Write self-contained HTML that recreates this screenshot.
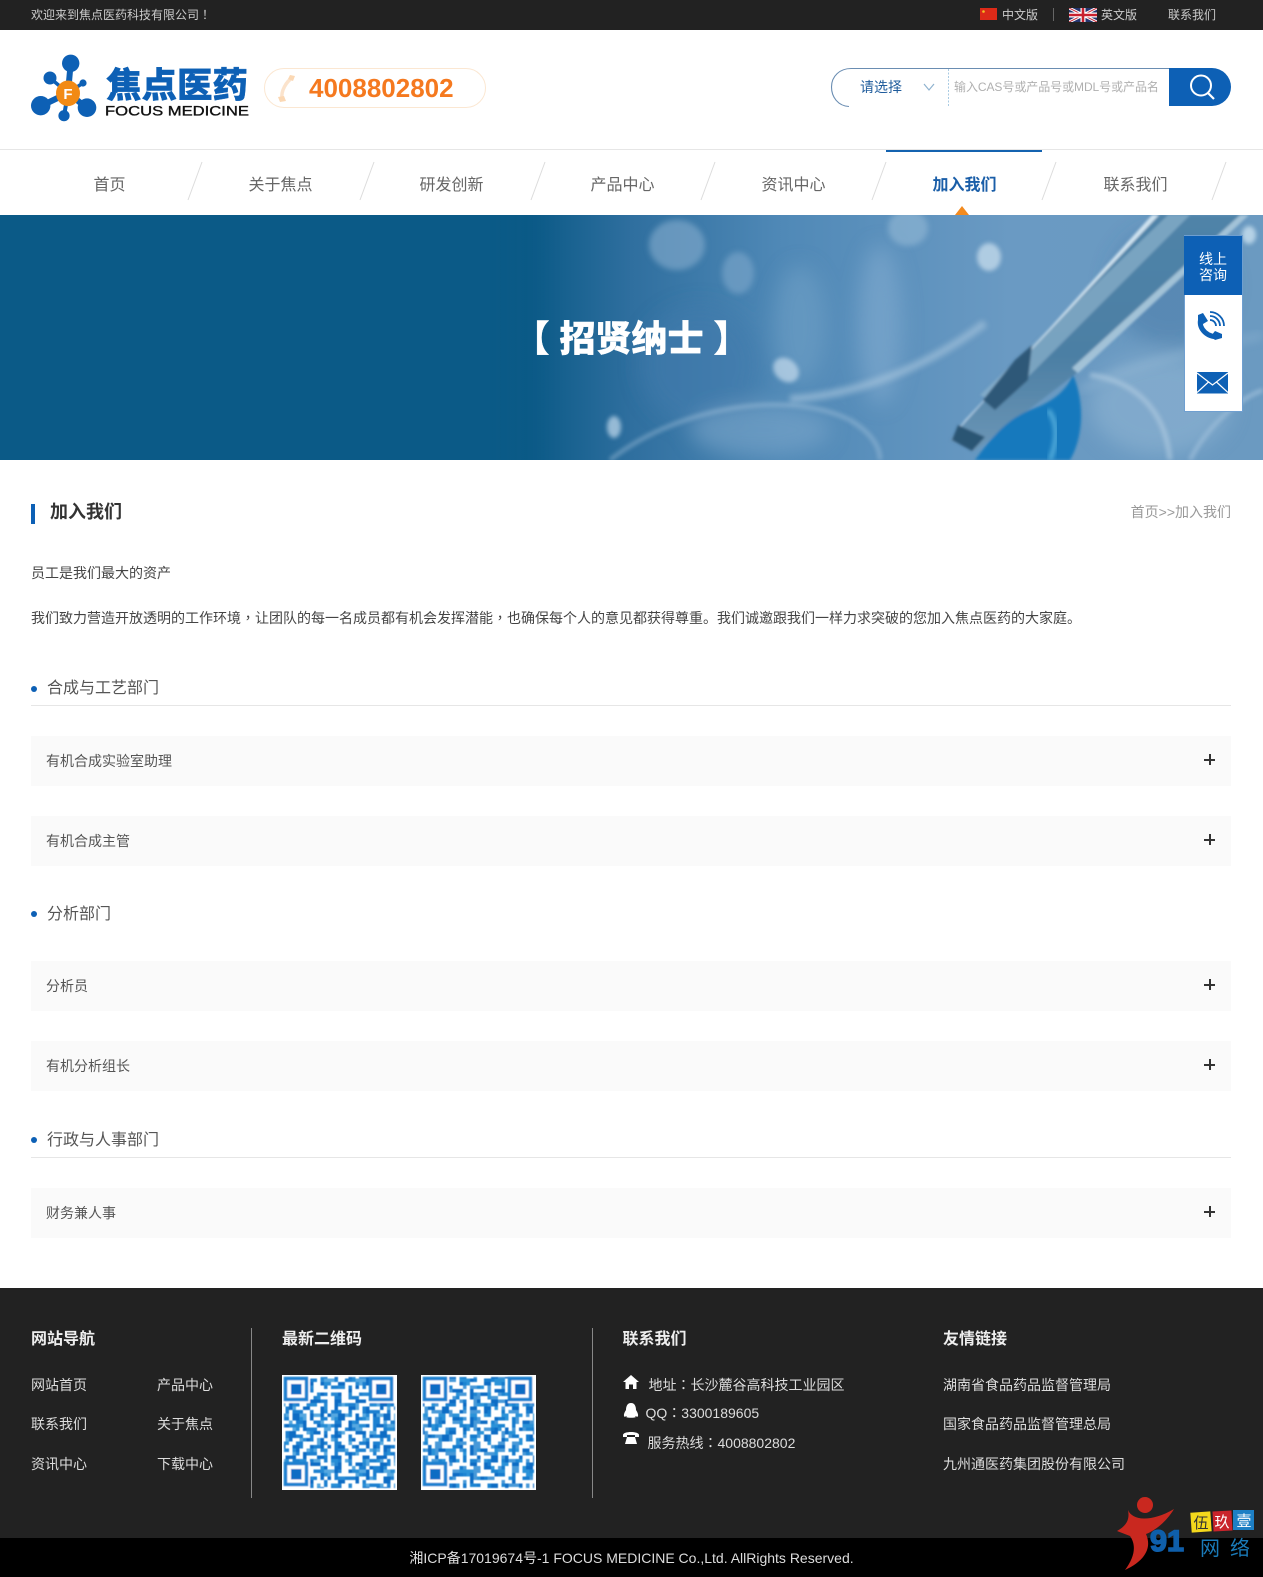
<!DOCTYPE html>
<html><head><meta charset="utf-8"><title>加入我们 - 焦点医药</title>
<style>
*{box-sizing:border-box;margin:0;padding:0}
html,body{width:1263px;height:1577px;overflow:hidden;background:#fff}
body{position:relative;font-family:"Liberation Sans","Noto Sans CJK SC",sans-serif;font-size:14px;color:#444}
.c{font-family:"Noto Sans CJK TC",sans-serif}
.t{position:absolute;white-space:nowrap;line-height:20px;height:20px}
.a{position:absolute}
.nav{font-size:16px;color:#666;width:120px;text-align:center;top:175.500px}
.top{font-size:12px;color:#ccc;top:5px}
.acc{position:absolute;left:31px;width:1200px;height:50px;background:#fafafa;padding-left:15px;line-height:50px;color:#555;font-size:14px}
.acc:before{content:"";position:absolute;left:1173px;top:23px;width:11px;height:2px;background:#333}
.acc:after{content:"";position:absolute;left:1178px;top:18px;width:2px;height:11px;background:#333}
.dept{font-size:16px;color:#555;left:47px}
.dot{position:absolute;left:31px;width:6px;height:6px;border-radius:50%;background:#0d60b5}
.ln{position:absolute;left:31px;width:1200px;height:1px;background:#e6e6e6}
.fh{font-size:16px;font-weight:bold;color:#eee;top:1330px}
.fl{color:#ddd;font-size:14px}
</style></head><body>

<div class="a" style="left:0;top:0;width:1263px;height:30px;background:#222"></div>
<div class="t top" style="left:31px">欢迎来到焦点医药科技有限公司<span class="c" lang="zh-TW">！</span></div>
<svg class="a" style="left:980px;top:8px" width="17" height="12" viewBox="0 0 17 12"><rect width="17" height="12" fill="#dc2a18"/><circle cx="3.5" cy="3.500" r="1.300" fill="#f3c020"/></svg>
<div class="t top" style="left:1002px">中文版</div>
<div class="a" style="left:1053px;top:8px;width:1px;height:13px;background:#666"></div>
<svg class="a" style="left:1069px;top:8px" width="28" height="14" viewBox="0 0 28 14"><rect width="28" height="14" fill="#25356f"/><path d="M0 0L28 14M28 0L0 14" stroke="#fff" stroke-width="3"/><path d="M0 0L28 14M28 0L0 14" stroke="#c8202f" stroke-width="1"/><path d="M14 0V14M0 7H28" stroke="#fff" stroke-width="5"/><path d="M14 0V14M0 7H28" stroke="#c8202f" stroke-width="2.600"/></svg>
<div class="t top" style="left:1101px">英文版</div>
<div class="t top" style="left:1168px">联系我们</div>

<svg class="a" style="left:0;top:30px" width="270" height="110" viewBox="0 30 270 110">
<g stroke="#0d60b5" fill="none"><path d="M70.700 63L68 93" stroke-width="6"/><path d="M50 78L68 93" stroke-width="3.500"/><path d="M83 83L68 93" stroke-width="3.500"/><path d="M41 106L68 93" stroke-width="6"/><path d="M87 108L68 93" stroke-width="6"/><path d="M64 116L68 93" stroke-width="4"/></g>
<g fill="#0d60b5"><circle cx="70.700" cy="63.300" r="8.700"/><circle cx="50" cy="78" r="6.500"/><circle cx="83" cy="83" r="3.600"/><circle cx="40.700" cy="105.700" r="9.700"/><circle cx="87" cy="107.700" r="9.300"/><circle cx="64" cy="115.700" r="5.600"/></g>
<ellipse cx="68" cy="93.300" rx="12" ry="12.800" fill="#f28a14"/>
<text x="68" y="99" text-anchor="middle" font-family="Liberation Sans" font-weight="bold" font-size="15" fill="#fff">F</text>
<text x="106" y="97.500" font-family="Noto Sans CJK SC,sans-serif" font-weight="900" font-size="35" fill="#0d60b5" stroke="#0d60b5" stroke-width=".4" textLength="142" lengthAdjust="spacingAndGlyphs">焦点医药</text>
<text x="105" y="115.500" font-family="Liberation Sans" font-size="13.500" fill="#111" stroke="#111" stroke-width=".35" textLength="144" lengthAdjust="spacingAndGlyphs">FOCUS MEDICINE</text>
</svg>

<div class="a" style="left:264px;top:68px;width:222px;height:40px;border:1px solid #fbe7d2;border-radius:20px"></div>
<svg class="a" style="left:272px;top:72px" width="26" height="32" viewBox="0 0 26 32"><path d="M20 6C14 10 9 19 10 26" fill="none" stroke="#fbe3cc" stroke-width="3.500"/><path d="M18 3l5 1-2 5-5-2zM6 25l6-1 2 5-6 1z" fill="#fbd8b4"/></svg>
<div class="a" style="left:309px;top:72px;font:bold 26px/32px 'Liberation Sans',sans-serif;color:#f5791f;white-space:nowrap">4008802802</div>

<svg class="a" style="left:825px;top:62px" width="350" height="50"><path d="M24 44.500C13 44 6.500 35 6.500 25C6.500 14 15 6.500 26 6.500H345" fill="none" stroke="#6a8db2" stroke-width="1.100"/><path d="M99 22l5 6 5-6" fill="none" stroke="#8fb2cf" stroke-width="1.200"/><path d="M123.500 7V44" stroke="#a9cbe3" stroke-width="1" stroke-dasharray="2 1.500"/></svg>
<div class="t" style="left:860px;top:77px;color:#1f5c9c">请选择</div>
<div class="t" style="left:954px;top:77px;font-size:12px;color:#b0b0b0;letter-spacing:-.06px">输入CAS号或产品号或MDL号或产品名</div>
<div class="a" style="left:1169px;top:68px;width:62px;height:38px;background:#0d60b5;border-radius:0 19px 19px 0"></div>
<svg class="a" style="left:1185px;top:71px" width="34" height="32"><circle cx="16" cy="14.500" r="10" fill="none" stroke="#fff" stroke-width="2"/><path d="M23 22l6 6" stroke="#fff" stroke-width="2.200"/></svg>

<div class="a" style="left:0;top:149px;width:1263px;height:1px;background:#e6e6e6"></div>
<div class="a" style="left:886px;top:150px;width:156px;height:2px;background:#1463b0"></div>
<div class="t nav" style="left:49.500px">首页</div>
<div class="t nav" style="left:220.500px">关于焦点</div>
<div class="t nav" style="left:391.500px">研发创新</div>
<div class="t nav" style="left:562.500px">产品中心</div>
<div class="t nav" style="left:733.500px">资讯中心</div>
<div class="t nav" style="left:904.500px;color:#1a5ea8;font-weight:bold">加入我们</div>
<div class="t nav" style="left:1075.500px">联系我们</div>
<svg class="a" style="left:1px;top:160px" width="1262" height="42"><g stroke="#dcdcdc" stroke-width="1"><path d="M201 2L187 40M373 2L359 40M544 2L530 40M714 2L700 40M885 2L871 40M1055 2L1041 40M1225 2L1211 40"/></g></svg>
<div class="a" style="left:955px;top:206px;width:0;height:0;border-left:7.500px solid transparent;border-right:7.500px solid transparent;border-bottom:9px solid #f28a1e"></div>

<svg class="a" style="left:0;top:215px" width="1263" height="245" viewBox="0 0 1263 245">
<defs>
<linearGradient id="bg" x1="0" x2="1" y1="0" y2="0"><stop offset="0" stop-color="#0b5a87"/><stop offset=".42" stop-color="#0b5a87"/><stop offset=".5" stop-color="#2f6f9f"/><stop offset=".62" stop-color="#5089b7"/><stop offset=".8" stop-color="#6a9ac3"/><stop offset="1" stop-color="#6b9ac1"/></linearGradient>
<linearGradient id="tube" x1="0" x2="0" y1="0" y2="1"><stop offset="0" stop-color="#4f83a8"/><stop offset=".6" stop-color="#4c7fa4"/><stop offset="1" stop-color="#6c96b6"/></linearGradient>
<filter id="b4"><feGaussianBlur stdDeviation="5"/></filter>
<filter id="b3"><feGaussianBlur stdDeviation="3"/></filter>
<filter id="b2"><feGaussianBlur stdDeviation="2"/></filter>
<filter id="b1"><feGaussianBlur stdDeviation="1.200"/></filter>
<filter id="b9"><feGaussianBlur stdDeviation="10"/></filter>
<linearGradient id="fade" x1="0" x2="1" y1="0" y2="0"><stop offset="0" stop-color="#0b5a87" stop-opacity="0"/><stop offset="1" stop-color="#0b5a87"/></linearGradient>
</defs>
<rect width="1263" height="245" fill="url(#bg)"/>
<g filter="url(#b9)"><ellipse cx="880" cy="110" rx="22" ry="80" fill="#89b2d4" opacity=".5"/><ellipse cx="800" cy="110" rx="26" ry="60" fill="#7ea9cd" opacity=".4"/><ellipse cx="700" cy="150" rx="60" ry="60" fill="#3f7bab" opacity=".6"/><ellipse cx="760" cy="215" rx="70" ry="26" fill="#7aa5c9" opacity=".6"/><ellipse cx="1160" cy="190" rx="70" ry="50" fill="#8fb4d2" opacity=".6"/><ellipse cx="1170" cy="70" rx="60" ry="60" fill="#3f749f" opacity=".4"/></g>
<g filter="url(#b3)">
<ellipse cx="677" cy="30" rx="28" ry="25" fill="#7fa9cb" opacity=".65"/>
<ellipse cx="738" cy="58" rx="16" ry="21" fill="#7fa9cb" opacity=".6"/>
<ellipse cx="908" cy="13" rx="20" ry="18" fill="#8cb3d2" opacity=".7"/>
</g>
<g filter="url(#b2)">
<ellipse cx="989" cy="42" rx="12" ry="14" fill="#bcd5e8" opacity=".85"/>
<ellipse cx="1154" cy="33" rx="11" ry="15" fill="#4f9ed3"/>
<ellipse cx="1249" cy="20" rx="7" ry="9" fill="#b6d2e6"/>
<ellipse cx="614" cy="212" rx="7" ry="11" fill="#a9c8df" opacity=".85"/>
<ellipse cx="786" cy="155" rx="14" ry="11" fill="#c6dcec" opacity=".7" transform="rotate(40 786 155)"/>
</g>
<path d="M790 184C860 180 930 150 985 108" fill="none" stroke="#a8c6de" stroke-width="8" filter="url(#b3)" opacity=".6"/>
<path d="M610 245C680 190 790 175 850 205C875 220 880 235 880 245" fill="none" stroke="#a5c4dd" stroke-width="4" filter="url(#b2)" opacity=".5"/>
<path d="M1090 160C1130 165 1165 190 1170 245" fill="none" stroke="#b5cfe3" stroke-width="5" filter="url(#b2)" opacity=".6"/>
<path d="M1190 245C1205 215 1235 185 1263 175" fill="none" stroke="#9fbfda" stroke-width="4" filter="url(#b2)" opacity=".8"/>
<path d="M1080 175C1130 150 1200 135 1263 120" fill="none" stroke="#a5c4dd" stroke-width="4" filter="url(#b4)" opacity=".6"/>
<g filter="url(#b1)">
<polygon points="1152,0 1249,0 1074,160 975,236 950,225" fill="url(#tube)"/>
<polygon points="1168,0 1190,0 1000,190 980,180" fill="#8cb2cc" opacity=".7"/>
<polygon points="1152,0 1159,0 965,205 955,218" fill="#cfe2ef"/>
<polygon points="1240,0 1249,0 1078,158 1072,153" fill="#b8d2e3" opacity=".8"/>
<polygon points="1015,145 1032,130 1028,165 995,195 983,185" fill="#2e5878"/>
<path d="M1073 160C1086 190 1082 225 1070 245H975C990 225 1005 205 1030 195C1050 188 1065 178 1073 160Z" fill="#1479bd"/>
<path d="M972 236L952 225L958 210L985 222Z" fill="#2a5573"/>
</g>
<path d="M1048 195C1060 210 1056 230 1050 245" fill="none" stroke="#5db5e0" stroke-width="5" filter="url(#b2)" opacity=".8"/>
<rect x="500" width="70" height="245" fill="url(#fade)" transform="matrix(-1 0 0 1 1060 0)" opacity=".6"/>
</svg>
<div class="a" style="left:0;top:312px;width:1263px;text-align:center;font-size:36px;line-height:54px;font-weight:900;color:#fff;white-space:pre;-webkit-text-stroke:.4px #fff">【 招贤纳士 】</div>

<div class="a" style="left:1184px;top:235px;width:59px;height:177px;background:#fff;border:1px solid #6f9fd0"></div>
<div class="a" style="left:1184px;top:236px;width:58px;height:59px;background:#0d60b5"></div>
<div class="a" style="left:1184px;top:251px;width:58px;text-align:center;color:#fff;font-size:14px;line-height:16px">线上<br>咨询</div>
<svg class="a" style="left:1195px;top:310px" width="32" height="32" viewBox="0 0 32 32"><path d="M7 7C2 14 8 26 22 27" fill="none" stroke="#0d60b5" stroke-width="5"/><path d="M8 3l5 8-5 3-5-3 0-6zM27 28l-7 2-4-4 4-5 7 3z" fill="#0d60b5"/><g fill="none" stroke="#0d60b5" stroke-width="1.800"><path d="M15 10a6 6 0 0 1 6 6"/><path d="M15 6a10 10 0 0 1 10 10"/><path d="M15 2a14 14 0 0 1 14 14"/></g></svg>
<svg class="a" style="left:1197px;top:372px" width="31" height="21.500" viewBox="0 0 31 21.500"><rect width="31" height="21.500" fill="#0d60b5"/><path d="M0 1L15.500 13 31 1M0 20.500L11.500 10M31 20.500L19.500 10" fill="none" stroke="#fff" stroke-width="1.200"/></svg>

<div class="a" style="left:31px;top:504px;width:4px;height:20px;background:#0d60b5"></div>
<div class="t" style="left:50px;top:502px;font-size:18px;font-weight:bold;color:#333">加入我们</div>
<div class="t" style="right:32px;top:502px;color:#999">首页&gt;&gt;加入我们</div>
<div class="t" style="left:31px;top:563px;color:#444">员工是我们最大的资产</div>
<div class="t" style="left:31px;top:608px;color:#444">我们致力营造开放透明的工作环境<span class="c" lang="zh-TW">，</span>让团队的每一名成员都有机会发挥潜能<span class="c" lang="zh-TW">，</span>也确保每个人的意见都获得尊重。我们诚邀跟我们一样力求突破的您加入焦点医药的大家庭。</div>

<div class="dot" style="top:686px"></div><div class="t dept" style="top:679px">合成与工艺部门</div><div class="ln" style="top:705px"></div>
<div class="acc" style="top:736px">有机合成实验室助理</div>
<div class="acc" style="top:816px">有机合成主管</div>
<div class="dot" style="top:911px"></div><div class="t dept" style="top:905px">分析部门</div>
<div class="acc" style="top:961px">分析员</div>
<div class="acc" style="top:1041px">有机分析组长</div>
<div class="dot" style="top:1137px"></div><div class="t dept" style="top:1131px">行政与人事部门</div><div class="ln" style="top:1157px"></div>
<div class="acc" style="top:1188px">财务兼人事</div>

<div class="a" style="left:0;top:1288px;width:1263px;height:250px;background:#222"></div>
<div class="a" style="left:0;top:1538px;width:1263px;height:39px;background:#000"></div>
<div class="t fh" style="left:31px">网站导航</div>
<div class="t fl" style="left:31px;top:1375px">网站首页</div><div class="t fl" style="left:157px;top:1375px">产品中心</div>
<div class="t fl" style="left:31px;top:1414px">联系我们</div><div class="t fl" style="left:157px;top:1414px">关于焦点</div>
<div class="t fl" style="left:31px;top:1454px">资讯中心</div><div class="t fl" style="left:157px;top:1454px">下载中心</div>
<div class="a" style="left:251px;top:1328px;width:1px;height:170px;background:#888"></div>
<div class="t fh" style="left:282px">最新二维码</div>
<svg class="a" style="left:282px;top:1375px" width="254" height="115" viewBox="0 0 254 115">
<defs>
<filter id="qb"><feGaussianBlur stdDeviation=".45"/></filter>
<pattern id="p1" width="11" height="7" patternUnits="userSpaceOnUse" patternTransform="scale(3.5)"><path fill="#1a80d0" d="M0 0h2v1h-2zM4 0h1v2h-1zM7 1h3v1h-3zM1 2h1v2h-1zM3 3h3v1h-3zM8 3h1v2h-1zM0 5h2v1h-2zM4 5h2v2h-2zM9 6h2v1h-2z"/></pattern>
<pattern id="p2" width="13" height="9" patternUnits="userSpaceOnUse" patternTransform="scale(3.5)"><path fill="#0f6cc4" d="M2 0h1v1h-1zM6 0h2v1h-2zM11 0h1v3h-1zM0 2h1v1h-1zM3 2h2v2h-2zM8 2h1v2h-1zM6 4h1v3h-1zM10 5h2v1h-2zM1 5h3v1h-3zM2 7h2v2h-2zM8 7h3v1h-3zM12 8h1v1h-1z"/></pattern>
<pattern id="p3" width="9" height="13" patternUnits="userSpaceOnUse" patternTransform="scale(3.5) translate(3 2)"><path fill="#2a92d8" d="M0 0h2v1h-2zM4 1h2v1h-2zM7 3h1v2h-1zM2 3h2v1h-2zM0 6h1v2h-1zM4 6h3v1h-3zM2 9h2v2h-2zM6 9h2v1h-2zM8 11h1v2h-1zM0 12h3v1h-3z"/></pattern>
<pattern id="p4" width="12" height="8" patternUnits="userSpaceOnUse" patternTransform="scale(3.5) translate(5 1)"><path fill="#0f6cc4" d="M1 0h2v2h-2zM6 1h1v1h-1zM9 0h2v1h-2zM4 3h3v1h-3zM0 4h2v1h-2zM9 3h1v3h-1zM3 6h2v2h-2zM7 6h1v2h-1zM11 6h1v1h-1z"/></pattern>
<g id="f"><rect width="26" height="26" fill="#fff"/><rect x="1.500" y="1.500" width="21" height="21" fill="none" stroke="#1a80d0" stroke-width="3.500"/><rect x="7" y="7" width="10.500" height="10.500" fill="#0f6cc4"/></g>
</defs>
<rect width="115" height="115" fill="#fff"/>
<g filter="url(#qb)"><rect x="2" y="2" width="111" height="111" fill="url(#p1)"/><rect x="2" y="2" width="111" height="111" fill="url(#p2)"/><rect x="2" y="2" width="111" height="111" fill="url(#p3)" opacity=".8"/>
<use href="#f" x="2" y="2"/><use href="#f" x="87" y="2"/><use href="#f" x="2" y="87"/></g>
<g transform="translate(139 0)"><rect width="115" height="115" fill="#fff"/>
<g filter="url(#qb)"><rect x="2" y="2" width="111" height="111" fill="url(#p3)"/><rect x="2" y="2" width="111" height="111" fill="url(#p4)"/><rect x="2" y="2" width="111" height="111" fill="url(#p1)" opacity=".8"/>
<use href="#f" x="2" y="2"/><use href="#f" x="87" y="2"/><use href="#f" x="2" y="87"/></g></g>
</svg>
<div class="a" style="left:592px;top:1328px;width:1px;height:170px;background:#888"></div>
<div class="t fh" style="left:622.500px">联系我们</div>
<svg class="a" style="left:622px;top:1374px" width="18" height="72" viewBox="0 0 18 72"><path d="M9 1L17 8h-2.500v7H11v-4.500H7V15H3.500V8H1z" fill="#fff"/><path d="M9 29c4 0 5 4 5 7 2 3 3 6 1 7-1-1-1-1-2-1l1 1c-2 1-8 1-10 0l1-1c-1 0-1 0-2 1-2-1-1-4 1-7 0-3 1-7 5-7z" fill="#fff"/><path d="M1 61c0-4 16-4 16 0v2h-4v-2H5v2H1zM5 63h8l2 7H3z" fill="#fff"/></svg>
<div class="t fl" style="left:648.500px;top:1375px">地址<span class="c" lang="zh-TW">：</span>长沙麓谷高科技工业园区</div>
<div class="t fl" style="left:645.500px;top:1403px">QQ<span class="c" lang="zh-TW">：</span>3300189605</div>
<div class="t fl" style="left:647.500px;top:1432.500px">服务热线<span class="c" lang="zh-TW">：</span>4008802802</div>
<div class="t fh" style="left:943px">友情链接</div>
<div class="t fl" style="left:943px;top:1375px">湖南省食品药品监督管理局</div>
<div class="t fl" style="left:943px;top:1414px">国家食品药品监督管理总局</div>
<div class="t fl" style="left:943px;top:1454px">九州通医药集团股份有限公司</div>
<div class="a" style="left:0;top:1548px;width:1263px;text-align:center;line-height:20px;color:#ddd;font-size:14px;white-space:nowrap">湘ICP备17019674号-1 FOCUS MEDICINE Co.,Ltd. AllRights Reserved.</div>

<svg class="a" style="left:1110px;top:1490px" width="153" height="87" viewBox="1110 1490 153 87">
<circle cx="1145" cy="1505" r="8" fill="#c9281f"/>
<path d="M1128 1510C1132 1520 1150 1523 1174 1509C1165 1524 1152 1532 1146 1534C1153 1550 1142 1562 1125 1570C1134 1558 1137 1546 1130 1536L1117 1531C1126 1526 1130 1520 1128 1510Z" fill="#c9281f"/>
<text x="1150" y="1551" font-family="Liberation Sans" font-weight="bold" font-size="30" fill="#0f5fab" stroke="#0f5fab" stroke-width="1.500" textLength="34" lengthAdjust="spacingAndGlyphs">91</text>
<rect x="1191" y="1512" width="20" height="20" fill="#f4d81c" transform="rotate(-4 1201 1522)"/><rect x="1213" y="1511" width="19" height="20" fill="#c9242b" transform="rotate(-3 1222 1521)"/><rect x="1233" y="1510" width="21" height="20" fill="#1d7fc4"/>
<g font-family="Noto Sans CJK SC,sans-serif" font-size="15" text-anchor="middle"><text x="1201" y="1528" fill="#333">伍</text><text x="1222" y="1527" fill="#fff">玖</text><text x="1244" y="1526" fill="#fff">壹</text></g>
<text x="1200" y="1555" font-family="Noto Sans CJK SC,sans-serif" font-size="20" fill="#1a7ab8" textLength="50">网 络</text>
</svg>
</body></html>
